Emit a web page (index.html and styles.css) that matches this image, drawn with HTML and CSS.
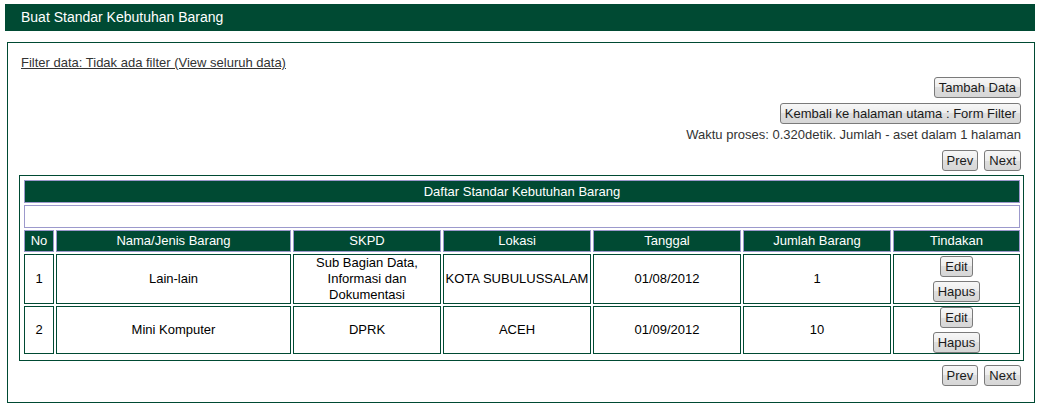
FILE: index.html
```html
<!DOCTYPE html>
<html>
<head>
<meta charset="utf-8">
<title>Buat Standar Kebutuhan Barang</title>
<link rel="stylesheet" href="styles.css">
</head>
<body>
<div class="page">
  <div class="titlebar">Buat Standar Kebutuhan Barang</div>
  <div class="panel">
    <a class="filter" href="#">Filter data: Tidak ada filter (View seluruh data)</a>
    <div class="actions">
      <button class="btn btn-add" type="button">Tambah Data</button>
      <button class="btn btn-back" type="button">Kembali ke halaman utama : Form Filter</button>
      <div class="info">Waktu proses: 0.320detik. Jumlah - aset dalam 1 halaman</div>
      <div class="pager pager-top">
        <button class="btn" type="button">Prev</button>
        <button class="btn" type="button">Next</button>
      </div>
    </div>
    <div class="grid-wrap">
      <table class="grid">
        <colgroup>
          <col class="c-no">
          <col class="c-nama">
          <col class="c-skpd">
          <col class="c-lokasi">
          <col class="c-tgl">
          <col class="c-jml">
          <col class="c-act">
        </colgroup>
        <tr class="r-title"><th colspan="7">Daftar Standar Kebutuhan Barang</th></tr>
        <tr class="r-blank"><td colspan="7"></td></tr>
        <tr class="r-head">
          <th>No</th>
          <th>Nama/Jenis Barang</th>
          <th>SKPD</th>
          <th>Lokasi</th>
          <th>Tanggal</th>
          <th>Jumlah Barang</th>
          <th>Tindakan</th>
        </tr>
        <tr class="r-data">
          <td>1</td>
          <td>Lain-lain</td>
          <td>Sub Bagian Data, Informasi dan Dokumentasi</td>
          <td>KOTA SUBULUSSALAM</td>
          <td>01/08/2012</td>
          <td>1</td>
          <td><div class="act"><button class="btn" type="button">Edit</button><button class="btn" type="button">Hapus</button></div></td>
        </tr>
        <tr class="r-data">
          <td>2</td>
          <td>Mini Komputer</td>
          <td>DPRK</td>
          <td>ACEH</td>
          <td>01/09/2012</td>
          <td>10</td>
          <td><div class="act"><button class="btn" type="button">Edit</button><button class="btn" type="button">Hapus</button></div></td>
        </tr>
      </table>
    </div>
    <div class="pager pager-bottom">
      <button class="btn" type="button">Prev</button>
      <button class="btn" type="button">Next</button>
    </div>
  </div>
</div>
</body>
</html>
```

FILE: styles.css
```css
html, body {
  margin: 0;
  padding: 0;
  background: #ffffff;
}

body {
  font-family: "Liberation Sans", Arial, sans-serif;
  font-size: 13px;
  color: #000;
}

.page {
  padding: 4px 4px 0 5px;
}

.titlebar {
  height: 27px;
  line-height: 27px;
  background: #004a33;
  color: #ffffff;
  font-size: 14px;
  padding-left: 16px;
}

.panel {
  margin: 11px 0 0 2px;
  border: 1px solid #004a33;
  padding: 12px 10px 16px 11px;
}

.filter {
  display: block;
  width: fit-content;
  margin-left: 2px;
  line-height: 15px;
  color: #333;
  text-decoration: underline;
}

.actions {
  display: flex;
  flex-direction: column;
  align-items: flex-end;
  padding-right: 3px;
}

.btn {
  font-family: "Liberation Sans", Arial, sans-serif;
  font-size: 13px;
  height: 21px;
  line-height: 19px;
  padding: 0 4px;
  margin: 0;
  border: 1px solid #7a7a7a;
  border-radius: 3px;
  background: linear-gradient(#f7f7f7 0%, #ececec 50%, #dedede 50%, #d6d6d6 100%);
  color: #1a1a1a;
}

.btn-add {
  margin-top: 7px;
}

.btn-back {
  margin-top: 5px;
}

.info {
  margin-top: 3px;
  line-height: 15px;
  color: #333;
}

.pager {
  display: flex;
  justify-content: flex-end;
  gap: 6px;
}

.pager-top {
  margin-top: 8px;
}

.pager-bottom {
  margin-top: 4px;
  padding-right: 3px;
}

.grid-wrap {
  margin-top: 4px;
  border: 1px solid #004a33;
  padding: 2px 2px 4px 2px;
}

.grid {
  width: 1000px;
  table-layout: fixed;
  border-collapse: separate;
  border-spacing: 2px;
}

.c-no { width: 30px; }
.c-nama { width: 235px; }
.c-skpd { width: 148px; }
.c-lokasi { width: 148px; }
.c-tgl { width: 148px; }
.c-jml { width: 148px; }
.c-act { width: 127px; }

.grid th,
.grid td {
  padding: 0 1px;
  text-align: center;
  vertical-align: middle;
  line-height: 16px;
  font-weight: normal;
}

.grid th {
  background: #004a33;
  color: #ffffff;
  border: 1px solid #9c99cc;
}

.r-title { height: 23px; }

.r-blank { height: 23px; }

.r-blank td {
  border: 1px solid #9c99cc;
  background: #ffffff;
}

.r-head { height: 22px; }

.r-data td {
  border: 1px solid #004a33;
  color: #000;
}

.act {
  display: flex;
  flex-direction: column;
  align-items: center;
  gap: 4px;
}
```
